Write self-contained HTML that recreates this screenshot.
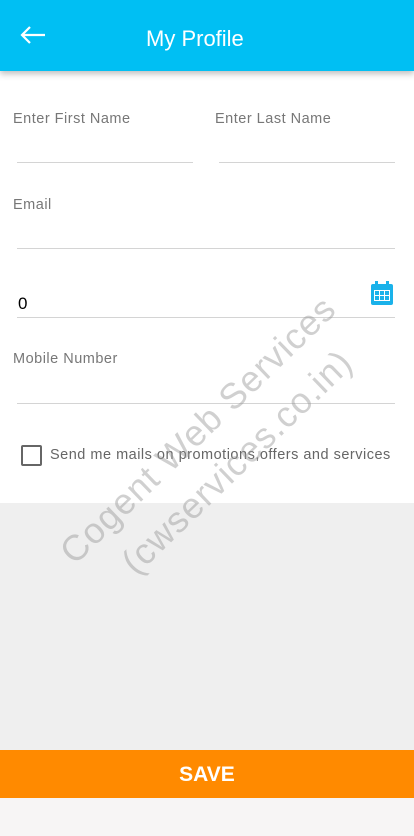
<!DOCTYPE html>
<html><head><meta charset="utf-8"><style>
*{margin:0;padding:0;box-sizing:border-box}
body{width:414px;height:836px;position:relative;overflow:hidden;background:#f7f5f5;font-family:"Liberation Sans",sans-serif}
.hdr{position:absolute;left:0;top:0;width:414px;height:71px;background:#00bff3;box-shadow:0 3px 6px rgba(0,0,0,.25);z-index:2}
.hdr .t{position:absolute;left:146px;top:26px;color:#fff;font-size:22px}
.form{position:absolute;left:0;top:71px;width:414px;height:432px;background:#fff}
.grey{position:absolute;left:0;top:503px;width:414px;height:247px;background:#efefef}
.lbl{position:absolute;color:#777;font-size:14.5px;letter-spacing:.5px}
.ln{position:absolute;height:1px;background:#d4d4d4}
.save{position:absolute;left:0;top:750px;width:414px;height:48px;background:#ff8a00;color:#fff;font-size:21px;font-weight:bold;text-align:center;line-height:50px}
.wm{position:absolute;color:rgba(150,150,150,.45);font-size:36px;white-space:nowrap;letter-spacing:1px;transform:translate(-50%,-50%) rotate(-44deg)}
</style></head><body>
<div class="hdr">
<svg style="position:absolute;left:19px;top:25px" width="27" height="20" viewBox="0 0 27 20"><path d="M26 10H3M11 2L3 10l8 8" stroke="#fff" stroke-width="2.2" fill="none"/></svg>
<div class="t">My Profile</div>
</div>
<div class="form"></div>
<div class="grey"></div>
<div class="lbl" style="left:13px;top:111px">Enter First Name</div>
<div class="lbl" style="left:215px;top:111px">Enter Last Name</div>
<div class="ln" style="left:17px;top:162px;width:176px"></div>
<div class="ln" style="left:219px;top:162px;width:176px"></div>
<div class="lbl" style="left:13px;top:197px">Email</div>
<div class="ln" style="left:17px;top:248px;width:378px"></div>
<div style="position:absolute;left:18px;top:294px;font-size:17px;color:#000">0</div>
<svg style="position:absolute;left:371px;top:281px" width="22" height="24" viewBox="0 0 22 24"><rect x="0" y="3" width="22" height="21" rx="2" fill="#1ab2ea"/><rect x="4" y="0" width="3" height="5" fill="#1ab2ea"/><rect x="15" y="0" width="3" height="5" fill="#1ab2ea"/><rect x="3" y="9" width="16" height="11" fill="#fff"/><g fill="#1ab2ea"><rect x="4" y="10" width="4" height="4"/><rect x="9" y="10" width="4" height="4"/><rect x="14" y="10" width="4" height="4"/><rect x="4" y="15" width="4" height="4"/><rect x="9" y="15" width="4" height="4"/><rect x="14" y="15" width="4" height="4"/></g></svg>
<div class="ln" style="left:17px;top:317px;width:378px"></div>
<div class="lbl" style="left:13px;top:351px">Mobile Number</div>
<div class="ln" style="left:17px;top:403px;width:378px"></div>
<div style="position:absolute;left:21px;top:445px;width:21px;height:21px;border:2px solid #666;border-radius:2px"></div>
<div class="lbl" style="left:50px;top:447px;color:#666">Send me mails on promotions,offers and services</div>
<div class="wm" style="left:198px;top:430px">Cogent Web Services</div>
<div class="wm" style="left:237px;top:462px">(cwservices.co.in)</div>
<div class="save">SAVE</div>
</body></html>
